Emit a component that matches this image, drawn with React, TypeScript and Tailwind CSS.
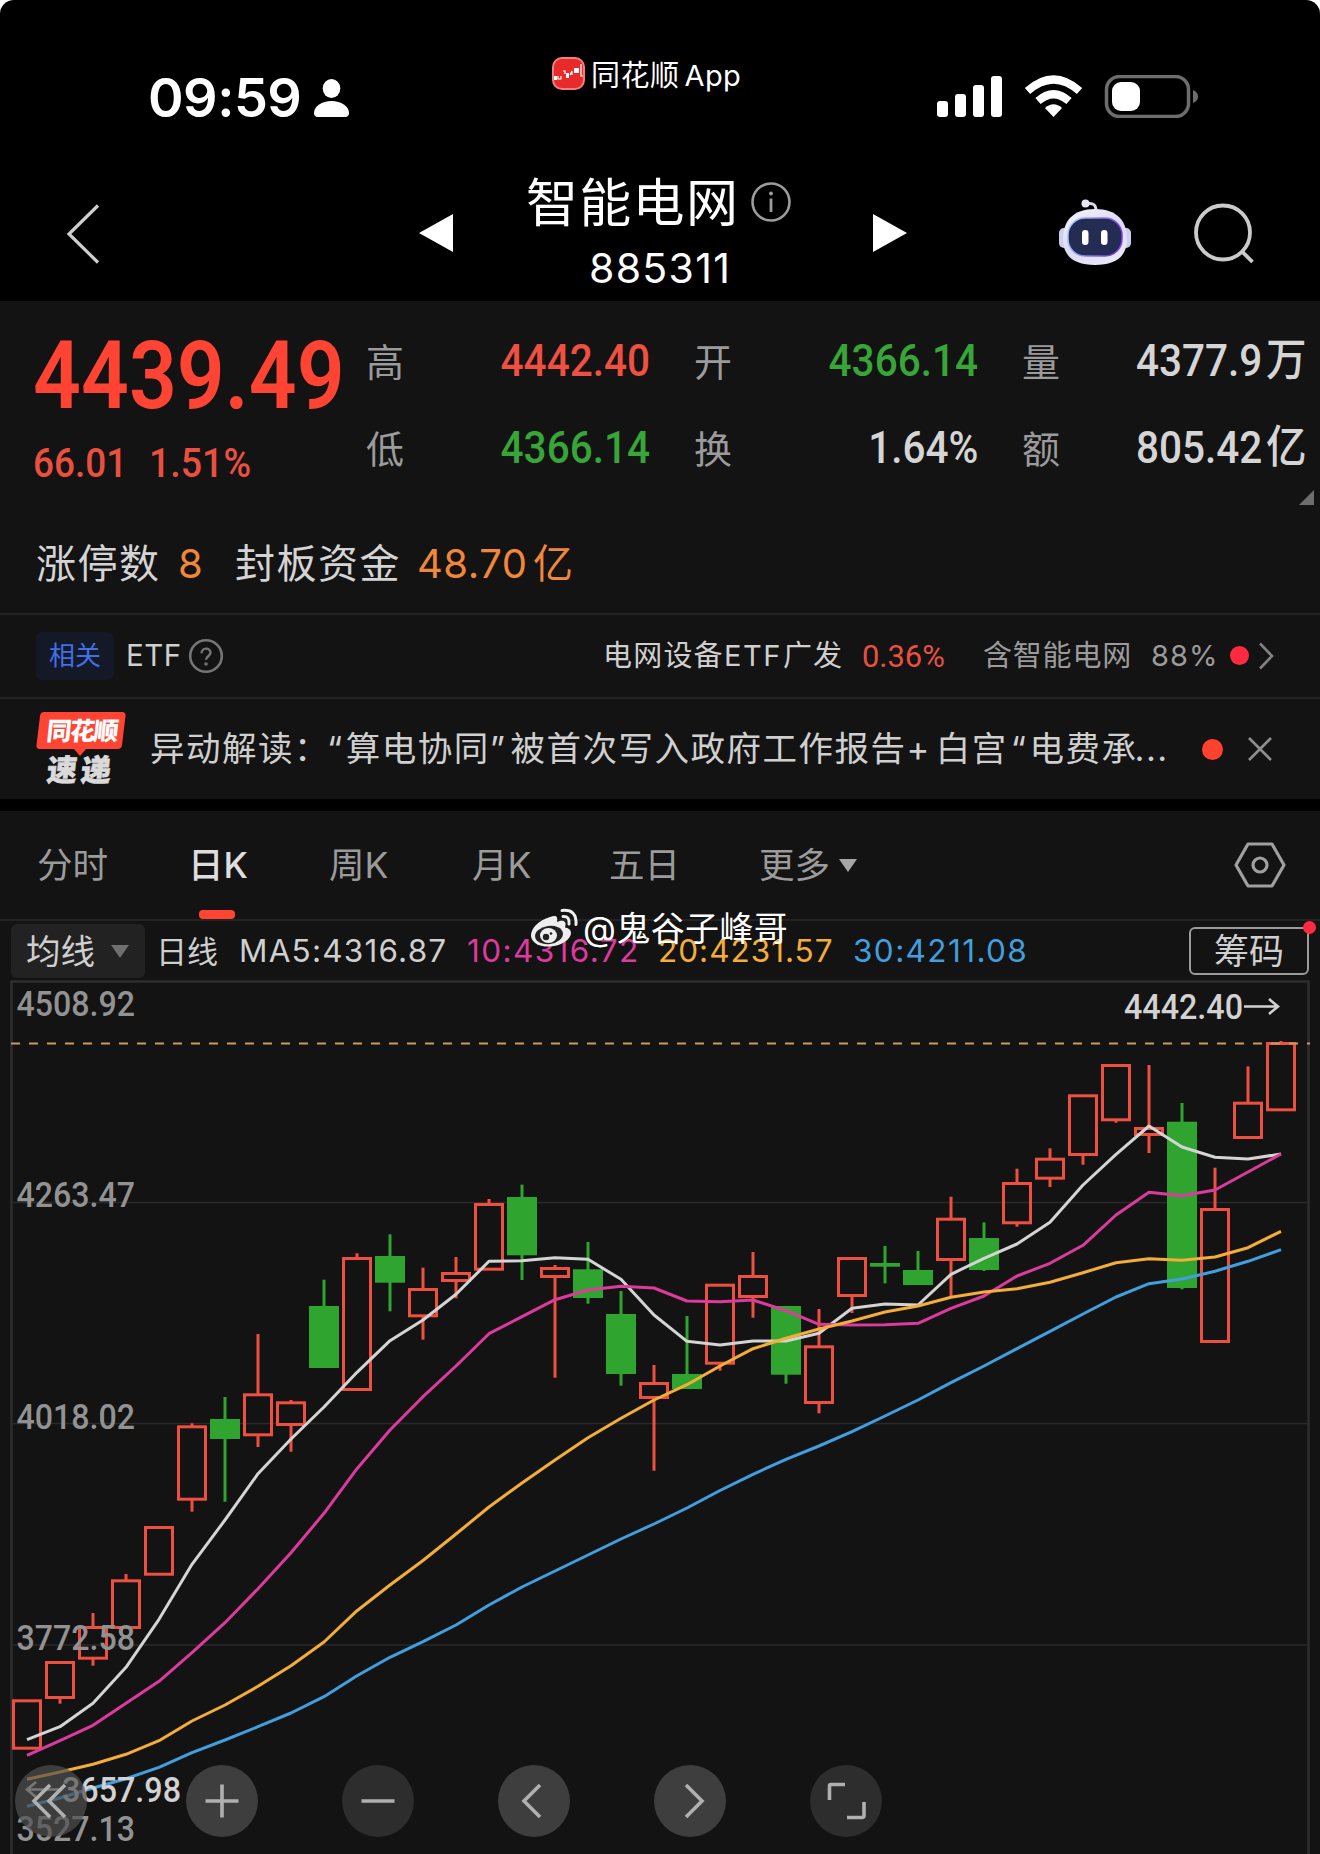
import type { ReactNode } from "react";
import clsx from "clsx";

const RED = "#ee5040";
const GREEN = "#2fa52f";

// [top, bottom] of the body and [high, low] of the wick, in chart units
type Candle = { up: boolean; body: [number, number]; wick: [number, number] };

const up = (top: number, bottom: number, high = top, low = bottom): Candle => ({
  up: true,
  body: [top, bottom],
  wick: [high, low],
});
const down = (top: number, bottom: number, high = top, low = bottom): Candle => ({
  up: false,
  body: [top, bottom],
  wick: [high, low],
});

const candles: Candle[] = [
  up(1699.3, 1749.7),
  up(1661, 1699, 1661, 1703.7),
  up(1626, 1659.7, 1613, 1665.7),
  up(1579.3, 1629, 1574),
  up(1526, 1575.7),
  up(1425.3, 1500.7, 1423.3, 1511.7),
  down(1419, 1439, 1397, 1501.7),
  up(1393.3, 1436.3, 1334, 1447),
  up(1401.3, 1426, 1400, 1451.7),
  down(1306, 1368, 1279.7),
  up(1257, 1391, 1253.3),
  down(1256, 1282.7, 1234.3, 1311.3),
  up(1288, 1317.3, 1267.7, 1339.7),
  up(1272, 1282, 1257, 1298.3),
  up(1203, 1270.7, 1199),
  down(1197, 1255.3, 1184.7, 1280),
  up(1267, 1278, 1265, 1377.7),
  down(1269.3, 1298, 1242, 1303.7),
  down(1314, 1374, 1291, 1385.7),
  up(1382, 1399, 1365, 1470.7),
  down(1374, 1389, 1316),
  up(1283.7, 1364.7, 1283.7, 1370.7),
  up(1275, 1298, 1252, 1317.7),
  down(1306, 1374.7, 1306, 1383.7),
  up(1345.3, 1404, 1309, 1413.3),
  up(1257, 1297, 1257, 1313),
  down(1263, 1266.7, 1246, 1283.3),
  down(1270, 1285, 1251),
  up(1217.7, 1261, 1196.7, 1297),
  down(1238, 1270, 1222.3, 1271),
  up(1182, 1224.3, 1168.7, 1226.7),
  up(1157.7, 1179.7, 1148.3, 1187),
  up(1094.3, 1156, 1094.3, 1164.7),
  up(1064, 1121.3, 1064, 1122.7),
  up(1127, 1136, 1065, 1153),
  down(1121.7, 1288, 1103, 1289.3),
  up(1208, 1343, 1167.7),
  up(1101.7, 1139, 1066.3),
  up(1042, 1111.3, 1041),
];

const averages = [
  {
    color: "#d4d4d4",
    points: [
      1739.7, 1726.7, 1703.3, 1667.3, 1619.3, 1564.3, 1520, 1473.7, 1439, 1407, 1372.3, 1340.7, 1320,
      1294.3, 1261.3, 1260.7, 1257.7, 1259.3, 1279.3, 1315, 1341.3, 1345, 1341, 1341, 1333.3, 1308.3,
      1304, 1305, 1274.3, 1258.3, 1244, 1222.3, 1185, 1154.3, 1126, 1147, 1157.3, 1159, 1154,
    ],
  },
  {
    color: "#dd3a9e",
    points: [
      1755.3, 1740.7, 1725.3, 1703.3, 1681.3, 1652.7, 1622.7, 1588.7, 1552.7, 1513.3, 1468.7, 1430,
      1396.7, 1366, 1333.7, 1316.7, 1299.7, 1290, 1286.3, 1288, 1301, 1301.7, 1300, 1310.7, 1324.3,
      1325, 1324.7, 1323.3, 1308.3, 1296, 1276, 1263.3, 1245.3, 1215, 1192.3, 1195.7, 1190, 1172, 1154,
    ],
  },
  {
    color: "#f4ae38",
    points: [
      1779.3, 1772, 1764.3, 1754.3, 1740.7, 1721, 1705, 1686.3, 1665.7, 1642, 1610.7, 1585, 1560.5,
      1534, 1507, 1483, 1460, 1437.7, 1418.3, 1400, 1384.7, 1366, 1348.7, 1338.3, 1329, 1321, 1312,
      1306, 1297.3, 1292, 1288.7, 1282.3, 1272.7, 1262.7, 1258.7, 1260.3, 1257, 1247.7, 1231.3,
    ],
  },
  {
    color: "#429fdf",
    points: [
      1806.3, 1798, 1788, 1778.7, 1767.3, 1752.7, 1740, 1726.7, 1713, 1696.7, 1675.7, 1657.3, 1641.7,
      1625, 1605, 1587, 1571, 1555, 1539, 1524, 1508, 1490.5, 1474.3, 1459.3, 1446, 1431.7, 1416, 1400,
      1382.7, 1366, 1348.7, 1331.3, 1314, 1297, 1283.7, 1279, 1271.3, 1261.3, 1249.7,
    ],
  },
];

const axisLabels = [
  { text: "4508.92", y: 1016 },
  { text: "4263.47", y: 1207 },
  { text: "4018.02", y: 1428.5 },
  { text: "3772.58", y: 1649.5 },
  { text: "3527.13", y: 1841 },
];

const candleX = (i: number) => 27 + 33 * i;

// Narrow DIN-like figures used for all quotes
function Num({ children, className }: { children: ReactNode; className?: string }) {
  return (
    <span
      className={clsx(
        "inline-block whitespace-nowrap font-['Roboto','Noto_Sans_CJK_SC',sans-serif] leading-none",
        className
      )}
    >
      {children}
    </span>
  );
}

function StatusBar() {
  return (
    <div className="flex h-[150px] items-start">
      <div className="ml-[148px] mt-[71px] flex w-[404px] items-center">
        <span className="w-[166px] text-[54px] font-semibold leading-[54px] tracking-[-0.5px]">09:59</span>
        <svg className="h-[38px] w-[35px]" viewBox="0 0 35 38" fill="#fff">
          <ellipse cx="17.5" cy="9.5" rx="8.8" ry="9.5" />
          <path d="M0 34C0 27 8 22 17.500 22S35 27 35 34Q35 38 31 38H4Q0 38 0 34Z" />
        </svg>
      </div>
      <div className="mt-[55px] flex w-[385px] items-center">
        <svg className="h-[33px] w-[33px]" viewBox="0 0 33 33">
          <rect x="1" y="1" width="31" height="31" rx="9" fill="#e82a2a" stroke="#f08080" strokeWidth="2" />
          <path d="M2 19h3v4H2zM14 16h3v5h-3zM22 11h5v5h-5z" fill="#fff" />
          <path d="M6 19v3h3v-3M11 14h2v3M18 18l2-4v4M29 7v12h2" fill="none" stroke="#fff" strokeWidth="1.2" />
        </svg>
        <span className="ml-[6px] mt-[4px] text-[29px] leading-[33px] tracking-[0.5px]">同花顺</span>
        <span className="ml-[5px] mt-[4px] text-[29px] leading-[33px] tracking-[0.4px]">App</span>
      </div>
      <div className="mt-[75px] flex items-center">
        <svg className="h-[43px] w-[262px]" viewBox="937 75 262 43">
          <g fill="#fff">
            <rect x="937" y="101" width="11" height="16" rx="3" />
            <rect x="955" y="94" width="11" height="23" rx="3" />
            <rect x="973" y="85" width="11" height="32" rx="3" />
            <rect x="991" y="76" width="11" height="41" rx="3" />
            <path d="M1053.500 117l-8.500-9q8.500-7.500 17 0z" />
          </g>
          <g fill="none" stroke="#fff" strokeWidth="8">
            <path d="M1027.500 91Q1053.500 68 1079.500 91" />
            <path d="M1038 101Q1053.500 87.500 1069 101" />
          </g>
          <rect x="1106.500" y="76.500" width="82" height="40" rx="13" fill="none" stroke="#6d6d6d" strokeWidth="3.500" />
          <rect x="1112" y="82" width="28" height="29" rx="9" fill="#fff" />
          <path d="M1193 90q5 2 5 6.500t-5 6.500z" fill="#6d6d6d" />
        </svg>
      </div>
    </div>
  );
}

function Robot() {
  return (
    <svg className="h-[68px] w-[72px]" viewBox="0 0 72 68">
      <defs>
        <linearGradient id="shell" x1="0" y1="0" x2="0.6" y2="1">
          <stop offset="0" stopColor="#f6f5fd" />
          <stop offset="0.6" stopColor="#dcd9f4" />
          <stop offset="1" stopColor="#e9e7fa" />
        </linearGradient>
        <linearGradient id="rim" x1="0" y1="0" x2="1" y2="0.3">
          <stop offset="0" stopColor="#9fd8f5" />
          <stop offset="1" stopColor="#7a3fe0" />
        </linearGradient>
      </defs>
      <path d="M27 5q11-3 10 9" fill="none" stroke="#dcdaf0" strokeWidth="3" />
      <circle cx="26.500" cy="4.500" r="4" fill="#e8e6f8" />
      <rect x="0" y="29" width="12" height="20" rx="5" fill="#cfcdf0" />
      <rect x="60" y="29" width="12" height="20" rx="5" fill="#cfcdf0" />
      <path d="M36 10C58 10 68 22 68 40C68 58 56 66 36 66S4 58 4 40C4 22 14 10 36 10Z" fill="url(#shell)" />
      <rect x="9" y="19" width="54" height="38" rx="17" fill="#252c54" stroke="url(#rim)" strokeWidth="1.500" />
      <rect x="23" y="31" width="6.500" height="15" rx="3.200" fill="#fff" />
      <rect x="42" y="31" width="6.500" height="15" rx="3.200" fill="#fff" />
    </svg>
  );
}

function TitleBar() {
  return (
    <div className="flex h-[151px]">
      <svg className="ml-[65px] mt-[54px] h-[60px] w-[35px]" viewBox="0 0 35 60">
        <path d="M33 1.500L4 30l29 28.500" fill="none" stroke="#cfcfcf" strokeWidth="3.200" />
      </svg>
      <svg className="ml-[319px] mt-[64px] h-[38px] w-[34px]" viewBox="0 0 34 38">
        <path d="M34 0v38L0 19z" fill="#fff" />
      </svg>
      <div className="ml-[73px] mt-[22px] w-[347px]">
        <div className="flex items-center">
          <span className="mt-[4px] w-[225px] whitespace-nowrap text-[52px] leading-[56px] tracking-[1.300px]">智能电网</span>
          <svg className="h-[40px] w-[40px]" viewBox="0 0 40 40" fill="none" stroke="#9c9c9c">
            <circle cx="20" cy="20" r="18.500" strokeWidth="2.600" />
            <path d="M20 16.500V30" strokeWidth="2.800" />
            <circle cx="20" cy="11.500" r="1.200" strokeWidth="1.500" fill="#9c9c9c" />
          </svg>
        </div>
        <div className="ml-[63px] mt-[16px] text-[41px] leading-[40px] tracking-[1.300px]">885311</div>
      </div>
      <svg className="mt-[64px] h-[38px] w-[34px]" viewBox="0 0 34 38">
        <path d="M0 0v38l34-19z" fill="#fff" />
      </svg>
      <div className="ml-[152px] mt-[49px]">
        <Robot />
      </div>
      <svg className="ml-[62px] mt-[53px] h-[61px] w-[62px]" viewBox="0 0 62 61" fill="none" stroke="#cbcbcb" strokeWidth="3.800">
        <circle cx="30" cy="29.500" r="27" />
        <path d="M49 48.500l10.500 10.500" />
      </svg>
    </div>
  );
}

function Stat({ label, children }: { label: string; children: ReactNode }) {
  return (
    <div className="flex h-[50px] items-center justify-between">
      <span className="mt-[4px] text-[38px] leading-none text-[#9b9b9b]">{label}</span>
      {children}
    </div>
  );
}

function Quote() {
  const value = "origin-right scale-x-[0.9] text-[45px] font-medium";
  return (
    <section className="flex h-[211px] bg-[#131313]">
      <div className="w-[366px] pl-[33px] pt-[28px] text-[#ff4433]">
        <Num className="block origin-left scale-x-[0.893] text-[94px] font-semibold">4439.49</Num>
        <div className="mt-[20px] flex text-[41px] text-[#ea5040]">
          <Num className="w-[116px] origin-left scale-x-[0.9] font-medium">66.01</Num>
          <Num className="origin-left scale-x-[0.915] font-medium">1.51%</Num>
        </div>
      </div>
      <div className="relative grid flex-1 auto-rows-[50px] grid-cols-[284px_284px_284px] content-start gap-x-[44px] gap-y-[37px] pt-[34px]">
        <Stat label="高">
          <Num className={clsx(value, "text-[#ee5141]")}>4442.40</Num>
        </Stat>
        <Stat label="开">
          <Num className={clsx(value, "text-[#38a538]")}>4366.14</Num>
        </Stat>
        <Stat label="量">
          <Num className={clsx(value, "text-[#d5d5d5]")}>
            4377.9<span className="ml-[4px]">万</span>
          </Num>
        </Stat>
        <Stat label="低">
          <Num className={clsx(value, "text-[#38a538]")}>4366.14</Num>
        </Stat>
        <Stat label="换">
          <Num className={clsx(value, "text-[#d5d5d5]")}>1.64%</Num>
        </Stat>
        <Stat label="额">
          <Num className={clsx(value, "text-[#d5d5d5]")}>
            805.42<span className="ml-[4px]">亿</span>
          </Num>
        </Stat>
        <svg className="absolute bottom-[7px] right-[6px] h-[15px] w-[15px]" viewBox="0 0 15 15">
          <path d="M15 0v15H0z" fill="#6e6e6e" />
        </svg>
      </div>
    </section>
  );
}

function LimitUp() {
  return (
    <section className="flex h-[103px] items-center whitespace-nowrap border-b-2 border-[#232323] bg-[#131313] pl-[36px] pt-[2px] text-[40px] leading-none text-[#d4d4d4]">
      <span className="w-[142px] tracking-[1.500px]">涨停数</span>
      <span className="w-[57px] text-[#f0873a]">8</span>
      <span className="w-[182px] tracking-[1.500px]">封板资金</span>
      <span className="w-[116px] tracking-[0.500px] text-[#f0873a]">48.70</span>
      <span className="text-[#f0873a]">亿</span>
    </section>
  );
}

function RelatedEtf() {
  return (
    <section className="flex h-[84px] items-center whitespace-nowrap border-b-2 border-[#232323] bg-[#131313] pb-px pl-[36px] text-[29px] leading-none text-[#cfcfcf]">
      <span className="flex h-[48px] w-[78px] items-center justify-center rounded-md bg-[#141928] text-[26px] text-[#426ee8]">
        相关
      </span>
      <span className="ml-[12px] w-[62px] text-[29.500px] tracking-[0.500px]">ETF</span>
      <svg className="h-[36px] w-[36px]" viewBox="0 0 36 36" fill="none" stroke="#757575">
        <circle cx="18" cy="18" r="15.800" strokeWidth="2.600" />
        <path d="M13.500 15.200c0-6 9-6 9-.6c0 3.600-4.500 3.600-4.500 7.200" strokeWidth="2.400" />
        <circle cx="18" cy="26" r="1" strokeWidth="1.500" />
      </svg>
      <span className="ml-[379px] w-[121px] tracking-[1.200px]">电网设备</span>
      <span className="w-[59px] tracking-[1.500px]">ETF</span>
      <span className="w-[79px] tracking-[1px]">广发</span>
      <Num className="w-[121px] origin-left scale-x-[0.965] text-[32px] text-[#ea5040]">0.36%</Num>
      <span className="w-[168px] tracking-[0.800px] text-[#9b9b9b]">含智能电网</span>
      <span className="w-[79px] tracking-[1px] text-[#9b9b9b]">88%</span>
      <span className="h-[19px] w-[19px] rounded-full bg-[#ff2940]" />
      <svg className="ml-[9px] h-[28px] w-[16px]" viewBox="0 0 16 28">
        <path d="M2 1.500L14 14 2 26.500" fill="none" stroke="#808080" strokeWidth="2.600" />
      </svg>
    </section>
  );
}

function News() {
  return (
    <section className="flex h-[100px] items-center whitespace-nowrap bg-[#131313] pl-[36px]">
      <div className="relative h-[74px] w-[90px] font-['Noto_Sans_CJK_SC',sans-serif] font-black leading-none">
        <svg className="absolute inset-0 h-[45px] w-[90px]" viewBox="0 0 90 45">
          <path d="M8 0H86q4 0 3.500 4L86 33q-.5 4-4.500 4H50l-6 7-6-7H4q-4 0-3.500-4L4 4Q4.500 0 8 0Z" fill="#ff4433" />
        </svg>
        <div className="relative -skew-x-6 pl-[11px] pt-[5px] text-[25px] tracking-[-1.500px] text-white">同花顺</div>
        <div className="relative -skew-x-6 pl-[12px] pt-[11px] text-[30px] tracking-[4px] text-[#dadada] [-webkit-text-stroke:0.6px_#dadada]">
          速递
        </div>
      </div>
      <div className="ml-[24px] flex w-[1052px] text-[34.500px] leading-none tracking-[1.500px] text-[#cfcfcf]">
        <span>异动解读：</span>
        <span className="-ml-[3px]">“</span>
        <span className="ml-[2px]">算电协同”</span>
        <span className="ml-[4px]">被首次写入政府工作报告</span>
        <span>+</span>
        <span className="ml-[5px]">白宫</span>
        <span className="ml-[3px]">“</span>
        <span className="ml-[2px]">电费承</span>
        <span className="-ml-[3px]">...</span>
      </div>
      <span className="h-[21px] w-[21px] rounded-full bg-[#ff4130]" />
      <svg className="ml-[25px] h-[24px] w-[24px]" viewBox="0 0 24 24">
        <path d="M1 1l22 22M23 1L1 23" stroke="#8f8f8f" strokeWidth="2.600" />
      </svg>
    </section>
  );
}

const tabs = [
  { label: "分时", width: "w-[151px]" },
  { label: "日K", width: "w-[141px]", active: true },
  { label: "周K", width: "w-[143px]" },
  { label: "月K", width: "w-[137px]" },
  { label: "五日", width: "w-[150px]" },
  { label: "更多", width: "w-[80px]" },
];

function Tabs() {
  return (
    <nav className="mt-[12px] flex h-[110px] items-center whitespace-nowrap border-b-2 border-[#232323] bg-[#131313] pl-[37px] text-[35.500px] leading-none text-[#9b9b9b]">
      {tabs.map((tab) => (
        <span
          key={tab.label}
          className={clsx("relative mt-[2px]", tab.width, tab.active && "font-medium text-[#dedede]")}
        >
          {tab.label}
          {tab.active && <i className="absolute left-[11px] top-[62px] h-[9px] w-[36px] rounded bg-[#ff4433]" />}
        </span>
      ))}
      <svg className="h-[13px] w-[18px]" viewBox="0 0 18 13">
        <path d="M0 0h18L9 13z" fill="#a6a6a6" />
      </svg>
      <svg className="ml-[377px] h-[46px] w-[52px]" viewBox="0 0 52 46" fill="none" stroke="#a0a0a0" strokeWidth="3.200">
        <path d="M14 2H38L50 23 38 44H14L2 23Z" strokeLinejoin="round" />
        <circle cx="26" cy="23" r="7" />
      </svg>
    </nav>
  );
}

function Watermark() {
  return (
    <div className="absolute left-[530px] top-[-14px] flex items-center whitespace-nowrap text-white">
      <svg className="h-[40px] w-[49px]" viewBox="0 0 49 40">
        <path
          d="M20 9C9 12 0 21 1 28.500C2.500 36 11 39 20 38.500C32 38 41 31 41 25C41 21.500 38 20 35 19.500C37 14 34 11 27 14C28 8 26 7 20 9Z"
          fill="#eee"
        />
        <ellipse cx="19" cy="27" rx="14" ry="9" transform="rotate(-8 19 27)" fill="#222" />
        <ellipse cx="18.500" cy="27.500" rx="8.500" ry="7.500" fill="#eee" />
        <circle cx="16" cy="29" r="3.200" fill="#222" />
        <circle cx="21" cy="25.500" r="1.300" fill="#222" />
        <path d="M33 8.500q7-.5 6 7.500M32 2.500q15-1.500 14 14" fill="none" stroke="#eee" strokeWidth="3" strokeLinecap="round" />
      </svg>
      <span className="ml-[4px] mt-[2px] text-[34px] leading-[40px] tracking-[0.400px]">@鬼谷子峰哥</span>
    </div>
  );
}

function Indicators() {
  return (
    <div className="relative flex h-[58px] items-center whitespace-nowrap bg-[#131313] pl-[11px] pt-[2px] text-[31.500px] leading-none text-[#cfcfcf]">
      <div className="flex h-[54px] w-[134px] items-center rounded-md bg-[#222] pl-[15px] text-[34.500px]">
        <span className="mt-[2px]">均线</span>
        <svg className="ml-[16px] h-[13px] w-[18px]" viewBox="0 0 18 13">
          <path d="M0 0h18L9 13z" fill="#6f6f6f" />
        </svg>
      </div>
      <span className="ml-[11px] w-[83px] text-[31px]">日线</span>
      <span className="w-[228px] tracking-[1.200px]">MA5:4316.87</span>
      <span className="w-[191px] tracking-[1.400px] text-[#dd3a9e]">10:4316.72</span>
      <span className="w-[195px] tracking-[1px] text-[#f4ae38]">20:4231.57</span>
      <span className="w-[336px] tracking-[1.400px] text-[#429fdf]">30:4211.08</span>
      <div className="relative flex h-[48px] w-[120px] items-center justify-center rounded-md border-2 border-[#9b9b9b] text-[35px]">
        筹码
        <i className="absolute -right-[9px] -top-[8px] h-[13px] w-[13px] rounded-full bg-[#ff2940]" />
      </div>
      <Watermark />
    </div>
  );
}

function KLine() {
  return (
    <svg
      className="block h-[875px] w-[1320px] bg-[#131313] font-['Roboto',sans-serif]"
      viewBox="0 979 1320 875"
      fontSize="35.500"
      fontWeight="500"
    >
      <path d="M11.500 1860V981.500H1308.500V1860" fill="none" stroke="#2e2e2e" strokeWidth="2.500" />
      {[1202.5, 1423.5, 1645].map((y) => (
        <path key={y} d={`M13 ${y}H1307`} stroke="#2a2a2a" strokeWidth="1.500" />
      ))}

      {candles.map((c, i) => {
        const x = candleX(i);
        const [top, bottom] = c.body;
        const color = c.up ? RED : GREEN;
        return (
          <g key={i} stroke={color} strokeWidth="3">
            {c.wick[0] < top && <path d={`M${x} ${c.wick[0]}V${top + 1}`} />}
            {c.wick[1] > bottom && <path d={`M${x} ${bottom - 1}V${c.wick[1]}`} />}
            {c.up ? (
              <rect x={x - 13.5} y={top + 1.5} width="27" height={bottom - top - 3} fill="none" />
            ) : (
              <rect x={x - 15} y={top} width="30" height={bottom - top} fill={color} stroke="none" />
            )}
          </g>
        );
      })}
      <path d="M11 1043.500H1310" stroke="#c99a5c" strokeWidth="1.800" strokeDasharray="9 9" />

      {averages.map((line) => (
        <polyline
          key={line.color}
          points={line.points.map((y, i) => `${candleX(i)},${y}`).join(" ")}
          fill="none"
          stroke={line.color}
          strokeWidth="3"
          strokeLinejoin="round"
        />
      ))}

      {axisLabels.map((label) => (
        <text key={label.text} x="16.500" y={label.y} textLength="118.500" lengthAdjust="spacingAndGlyphs" fill="#929292">
          {label.text}
        </text>
      ))}
      <g fill="#d2d2d2">
        <text x="1124" y="1019" textLength="119" lengthAdjust="spacingAndGlyphs">
          4442.40
        </text>
        <text x="62" y="1802" textLength="119" lengthAdjust="spacingAndGlyphs">
          3657.98
        </text>
      </g>
      <g fill="none" stroke="#d2d2d2" strokeWidth="2.600">
        <path d="M1244 1006.500H1277M1269 999l9 7.500-9 7.500" />
        <path d="M62 1789.500H28M36 1782l-9 7.500 9 7.500" />
      </g>
    </svg>
  );
}

const controls = [
  { name: "rewind", bg: "bg-[#505050]/70", gap: "mr-[99px]", d: "M35 20L19 36l16 16M50 20L34 36l16 16" },
  { name: "zoom-in", bg: "bg-[#3e3e3e]", gap: "mr-[84px]", d: "M19.500 36h33M36 19.500v33" },
  { name: "zoom-out", bg: "bg-[#2d2d2d]", gap: "mr-[84px]", d: "M19.500 36h33" },
  { name: "prev", bg: "bg-[#3e3e3e]", gap: "mr-[84px]", d: "M42 20L26 36l16 16" },
  { name: "next", bg: "bg-[#3e3e3e]", gap: "mr-[84px]", d: "M32 20l16 16-16 16" },
  { name: "fullscreen", bg: "bg-[#2d2d2d]", gap: "", d: "M19.500 35V21q0-1.500 1.500-1.500H35M54 37V50.500q0 2-2 2H37" },
];

function ChartControls() {
  return (
    <div className="absolute bottom-[17px] left-[15px] flex">
      {controls.map((c) => (
        <button key={c.name} aria-label={c.name} className={clsx("h-[72px] w-[72px] rounded-full", c.bg, c.gap)}>
          <svg className="h-[72px] w-[72px]" viewBox="0 0 72 72" fill="none" stroke="#b0b0b0" strokeWidth="3.600">
            <path d={c.d} />
          </svg>
        </button>
      ))}
    </div>
  );
}

export default function App() {
  return (
    <div className="h-[1854px] w-[1320px] overflow-hidden bg-white">
      <main className="h-full overflow-hidden rounded-t-[14px] bg-black font-['Inter','Noto_Sans_CJK_SC',sans-serif] text-white">
        <StatusBar />
        <TitleBar />
        <Quote />
        <LimitUp />
        <RelatedEtf />
        <News />
        <Tabs />
        <Indicators />
        <div className="relative">
          <KLine />
          <ChartControls />
        </div>
      </main>
    </div>
  );
}
